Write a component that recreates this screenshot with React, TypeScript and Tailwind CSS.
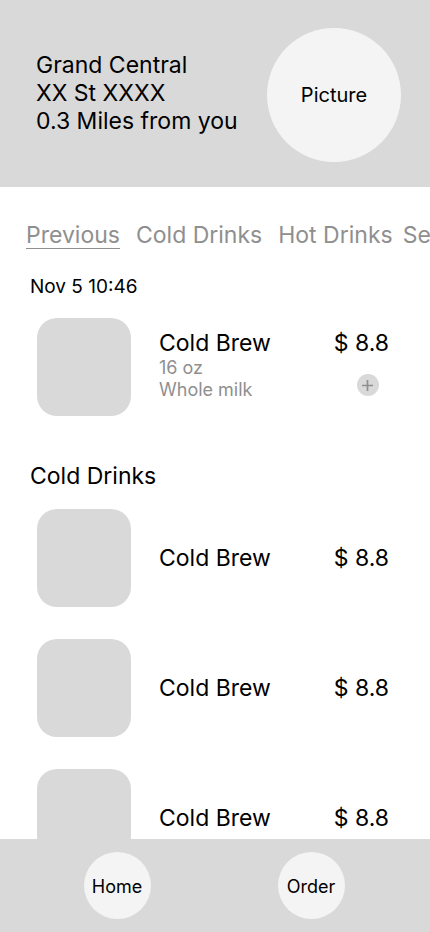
import { useState } from "react";

type Drink = {
  id: number;
  name: string;
  price: string;
  options?: string[];
};

const tabs = [
  { label: "Previous", spacing: "" },
  { label: "Cold Drinks", spacing: "ml-4" },
  { label: "Hot Drinks", spacing: "ml-4" },
  { label: "Seasonal", spacing: "ml-[10px]" },
];

const previousOrders: Drink[] = [
  { id: 1, name: "Cold Brew", price: "$ 8.8", options: ["16 oz", "Whole milk"] },
];

const coldDrinks: Drink[] = [
  { id: 2, name: "Cold Brew", price: "$ 8.8" },
  { id: 3, name: "Cold Brew", price: "$ 8.8" },
  { id: 4, name: "Cold Brew", price: "$ 8.8" },
];

function DrinkRow({ drink }: { drink: Drink }) {
  return (
    <li className="flex pl-[37px] pr-[41px]">
      <div className="h-[98px] w-[94px] shrink-0 rounded-[20px] bg-[#d9d9d9]" />
      <div
        className={
          drink.options
            ? "ml-7 flex flex-1 items-start justify-between pt-[11px]"
            : "ml-7 flex flex-1 items-center justify-between"
        }
      >
        <div>
          <h3 className="text-[23px] leading-7">{drink.name}</h3>
          {drink.options?.map((option) => (
            <p key={option} className="text-[18px] leading-[22px] text-[#8f8f8f]">
              {option}
            </p>
          ))}
        </div>
        <div className="flex flex-col items-end">
          <p className="text-[23px] leading-7">{drink.price}</p>
          {drink.options && (
            <button
              type="button"
              aria-label={`Add ${drink.name}`}
              className="mr-[10px] mt-[17px] flex size-[22px] items-center justify-center rounded-full bg-[#d9d9d9] text-[#8f8f8f]"
            >
              <svg viewBox="0 0 22 22" className="size-[22px]" fill="none" stroke="currentColor" strokeWidth="1.7">
                <path d="M5 11.5H16M10.5 6V17" />
              </svg>
            </button>
          )}
        </div>
      </div>
    </li>
  );
}

export default function App() {
  const [active, setActive] = useState("Previous");

  return (
    <div className="flex h-dvh flex-col overflow-hidden bg-white font-['Inter',sans-serif] text-black">
      <header className="flex shrink-0 items-center justify-between bg-[#d9d9d9] pb-[25px] pl-9 pr-[29px] pt-7">
        <address className="pb-1 text-[23px] not-italic leading-7">
          <p>Grand Central</p>
          <p>XX St XXXX</p>
          <p>0.3 Miles from you</p>
        </address>
        <div className="flex size-[134px] shrink-0 items-center justify-center rounded-full bg-[#f4f4f4] text-[20px] leading-6">
          Picture
        </div>
      </header>

      <nav className="mt-[34px] flex shrink-0 overflow-hidden pl-[26px]" aria-label="Menu sections">
        {tabs.map((tab) => (
          <button
            key={tab.label}
            type="button"
            onClick={() => setActive(tab.label)}
            className={`shrink-0 whitespace-nowrap text-[23px] leading-7 text-[#8f8f8f] ${tab.spacing} ${
              active === tab.label ? "underline decoration-1 underline-offset-[5px]" : ""
            }`}
          >
            {tab.label}
          </button>
        ))}
      </nav>

      <main className="min-h-0 flex-1 overflow-hidden">
        <section className="pt-[26px]">
          <h2 className="pl-[30px] text-[19px] leading-[23px]">Nov 5 10:46</h2>
          <ul className="mt-5">
            {previousOrders.map((drink) => (
              <DrinkRow key={drink.id} drink={drink} />
            ))}
          </ul>
        </section>
        <section className="pt-[46px]">
          <h2 className="pl-[30px] text-[23px] leading-7">Cold Drinks</h2>
          <ul className="mt-[19px] flex flex-col gap-8">
            {coldDrinks.map((drink) => (
              <DrinkRow key={drink.id} drink={drink} />
            ))}
          </ul>
        </section>
      </main>

      <footer className="flex shrink-0 justify-center gap-[127px] bg-[#d9d9d9] py-[13px] pr-0.5">
        <button type="button" className="size-[67px] rounded-full bg-[#f4f4f4] pt-0.5 text-[18px] leading-[22px]">
          Home
        </button>
        <button type="button" className="size-[67px] rounded-full bg-[#f4f4f4] pt-0.5 text-[18px] leading-[22px]">
          Order
        </button>
      </footer>
    </div>
  );
}
